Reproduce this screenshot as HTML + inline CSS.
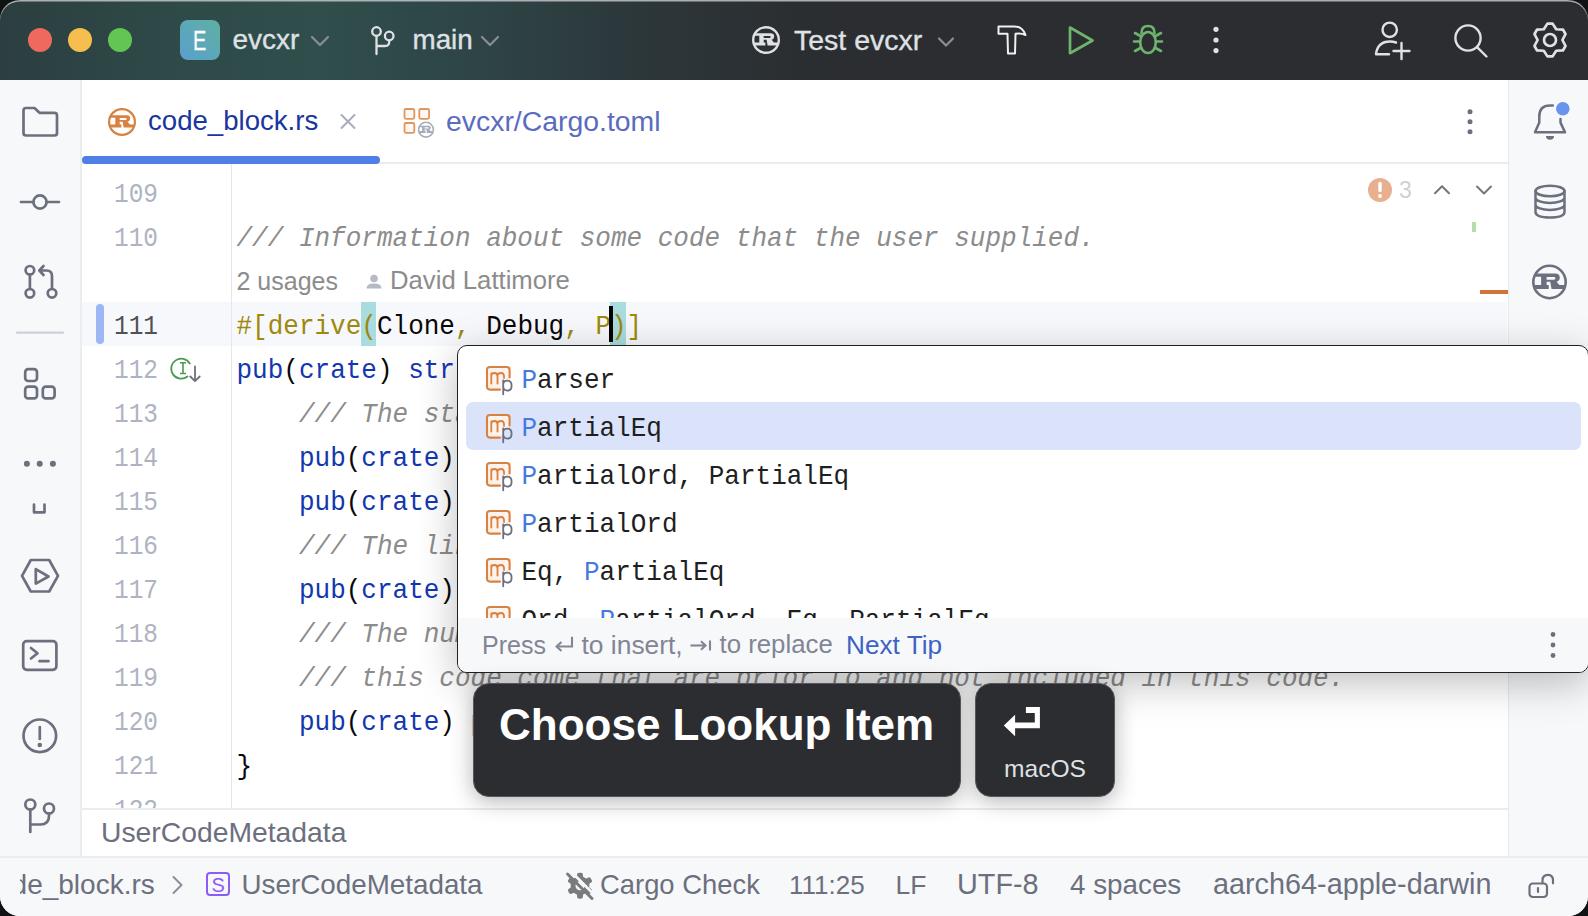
<!DOCTYPE html>
<html><head><meta charset="utf-8">
<style>
*{margin:0;padding:0;box-sizing:border-box}
html,body{width:1588px;height:916px;overflow:hidden;background:#111213}
body{font-family:"Liberation Sans",sans-serif;position:relative}
.win{position:absolute;left:0;top:0;width:1588px;height:916px;border-radius:20px;overflow:hidden;background:#fff}
.abs{position:absolute}
.t{position:absolute;white-space:pre;line-height:1}
svg.layer{position:absolute;left:0;top:0;width:1588px;height:916px;overflow:visible}
#title{left:0;top:0;width:1588px;height:80px;background:#2b2d30}
#title .grad{position:absolute;left:0;top:0;width:1588px;height:80px;
 background:linear-gradient(90deg,#2c3e40 0px,#2e4a49 180px,#2f4e4c 320px,#2e4547 470px,#2c373a 640px,#2b2e31 800px,#2b2d30 900px)}
#lefttb{left:0;top:80px;width:82px;height:777px;background:#f7f8fa;border-right:2px solid #ebecf0}
#righttb{left:1508px;top:80px;width:80px;height:777px;background:#f7f8fa;border-left:1.5px solid #e8e9ed}
#tabs{left:82px;top:80px;width:1426px;height:84px;background:#fff;border-bottom:2px solid #ebecf0}
.ln,.cl,.pi{position:absolute;font-family:"Liberation Mono",monospace;font-size:26px;line-height:1;white-space:pre;color:#080808;transform:scaleY(1.07);transform-origin:0 19.92px}
.ln{width:76px;text-align:right;color:#aeb3c2;transform:scale(0.94,1.07);transform-origin:100% 19.92px}
.kw{color:#1337b0}
.cm{color:#8c8c8c;font-style:italic}
.at{color:#9e880d}
.fd{color:#871094}
.pu{color:#080808}
#bread{left:82px;top:808px;width:1426px;height:49px;background:#fff;border-top:2px solid #ebecf0}
#status{left:0;top:856px;width:1588px;height:60px;background:#f7f8fa;border-top:2px solid #ebecf0}
.st{position:absolute;font-size:26px;color:#6c707e;white-space:pre;line-height:1}
.pi{color:#1e1f22}
.pi b{font-weight:normal;color:#4479e2}
</style></head><body>
<div class="win">
 <!-- title bar -->
 <div id="title" class="abs"><div class="grad"></div>
  <div class="abs" style="left:28px;top:28px;width:24px;height:24px;border-radius:50%;background:#ee6a5f"></div>
  <div class="abs" style="left:68px;top:28px;width:24px;height:24px;border-radius:50%;background:#f5be4f"></div>
  <div class="abs" style="left:108px;top:28px;width:24px;height:24px;border-radius:50%;background:#62c554"></div>
  <div class="abs" style="left:180px;top:20px;width:40px;height:40px;border-radius:8px;background:linear-gradient(45deg,#5a9fce,#5fb0a2)"></div>
 </div>
 <div id="lefttb" class="abs"></div>
 <div id="righttb" class="abs"></div>
 <!-- tabs -->
 <div id="tabs" class="abs">
  <div class="abs" style="left:0;top:76px;width:298px;height:8px;border-radius:4px;background:#4f7ee6"></div>
 </div>
 <!-- editor -->
 <div class="abs" style="left:82px;top:302px;width:1425px;height:44px;background:#f7f8fc"></div>
 <div class="abs" style="left:361px;top:302px;width:15px;height:44px;background:#a9dcde"></div>
 <div class="abs" style="left:610px;top:302px;width:16px;height:44px;background:#a9dcde"></div>
 <div class="abs" style="left:230.5px;top:164px;width:1.5px;height:644px;background:#e6e7eb"></div>
 <div class="abs" style="left:96px;top:304px;width:8px;height:40px;border-radius:4px;background:#9db7f5"></div>
 <div class="ln" style="left:82.00px;top:182.08px;">109</div>
 <div class="ln" style="left:82.00px;top:226.08px;">110</div>
 <div class="ln" style="left:82.00px;top:314.08px;color:#4f5157">111</div>
 <div class="ln" style="left:82.00px;top:358.08px;">112</div>
 <div class="ln" style="left:82.00px;top:402.08px;">113</div>
 <div class="ln" style="left:82.00px;top:446.08px;">114</div>
 <div class="ln" style="left:82.00px;top:490.08px;">115</div>
 <div class="ln" style="left:82.00px;top:534.08px;">116</div>
 <div class="ln" style="left:82.00px;top:578.08px;">117</div>
 <div class="ln" style="left:82.00px;top:622.08px;">118</div>
 <div class="ln" style="left:82.00px;top:666.08px;">119</div>
 <div class="ln" style="left:82.00px;top:710.08px;">120</div>
 <div class="ln" style="left:82.00px;top:754.08px;">121</div>
 <div class="ln" style="left:82.00px;top:798.08px;">122</div>
 <div class="cl" style="left:236.50px;top:226.08px;"><span class="cm">/// Information about some code that the user supplied.</span></div>
 <div class="cl" style="left:236.50px;top:314.08px;"><span class="at">#[derive(</span>Clone<span class="at">, </span>Debug<span class="at">, P)]</span></div>
 <div class="cl" style="left:236.50px;top:358.08px;"><span class="kw">pub</span>(<span class="kw">crate</span>) <span class="kw">struct</span> UserCodeMetadata {</div>
 <div class="cl" style="left:236.50px;top:402.08px;">    <span class="cm">/// The start byte</span></div>
 <div class="cl" style="left:236.50px;top:446.08px;">    <span class="kw">pub</span>(<span class="kw">crate</span>) <span class="fd">start_byte</span>: usize,</div>
 <div class="cl" style="left:236.50px;top:490.08px;">    <span class="kw">pub</span>(<span class="kw">crate</span>) <span class="fd">end_byte</span>: usize,</div>
 <div class="cl" style="left:236.50px;top:534.08px;">    <span class="cm">/// The line number</span></div>
 <div class="cl" style="left:236.50px;top:578.08px;">    <span class="kw">pub</span>(<span class="kw">crate</span>) <span class="fd">start_line</span>: usize,</div>
 <div class="cl" style="left:236.50px;top:622.08px;">    <span class="cm">/// The number of lines</span></div>
 <div class="cl" style="left:236.50px;top:666.08px;">    <span class="cm">/// this code come that are prior to and not included in this code.</span></div>
 <div class="cl" style="left:236.50px;top:710.08px;">    <span class="kw">pub</span>(<span class="kw">crate</span>) <span class="fd">prior_lines</span>: usize,</div>
 <div class="cl" style="left:236.50px;top:754.08px;">}</div>
 <div class="abs" style="left:609px;top:306px;width:4px;height:36px;background:#000"></div>


 <div id="bread" class="abs"></div>
 <div id="status" class="abs"></div>
 <!-- chrome icons -->
 <svg class="layer" viewBox="0 0 1588 916" fill="none" stroke-linecap="round" stroke-linejoin="round">
  <!-- title -->
  <g stroke="#8b8e95" stroke-width="2.2"><path d="M312 37L320 45L328 37"/><path d="M482 37L490 45L498 37"/><path d="M939 38.5L946 45.5L953 38.5"/></g>
  <g stroke="#dfe1e5" stroke-width="2.3">
   <circle cx="376.5" cy="31.5" r="4.3"/><circle cx="389.2" cy="36" r="4.3"/>
   <path d="M376.5 36V54M389.2 40.3V42Q389.2 46 385 46H376.5"/>
  </g>
  <g fill="#dfe1e5"><circle cx="766.0" cy="40.0" r="12.8" fill="none" stroke="#dfe1e5" stroke-width="2.4"/><g transform="translate(752.00 26.00) scale(1.000)"><path fill-rule="evenodd" d="M2.3 7.2H18.5Q22.2 7.2 22.2 10.5Q22.2 13 19.6 13.8L21.9 16.4H25.9V19.6H15.6L14.6 13.8H11.7V16.4H13.4V19.6H1.9V16.4H7.3V9.8H2.3ZM11.7 10H17.6Q18.7 10 18.7 11.05Q18.7 12.1 17.6 12.1H11.7Z"/></g></g>
  <path stroke="#f0f0f0" stroke-width="2" d="M998.5 26.5H1014.5Q1022.5 26.5 1025.5 35Q1021.5 33 1015.5 33.8L1015 53.5H1008L1007.5 33.8H998.5Z"/>
  <path stroke="#6db46f" stroke-width="2.7" d="M1070 27.5L1092.5 40.5L1070 53.2Z"/>
  <g stroke="#6db46f" stroke-width="2.6">
   <path d="M1141.5 33Q1141.5 26 1148 26Q1154.5 26 1154.5 33"/>
   <ellipse cx="1148" cy="42.5" rx="7.8" ry="10.5"/>
   <path d="M1134 41.5H1140M1156 41.5H1162M1135 33L1140.5 36M1161 33L1155.5 36M1135 51L1140.5 48M1161 51L1155.5 48"/>
  </g>
  <g fill="#dfe1e5"><circle cx="1216" cy="29.3" r="2.6"/><circle cx="1216" cy="40" r="2.6"/><circle cx="1216" cy="50.6" r="2.6"/></g>
  <g stroke="#dfe1e5" stroke-width="2.4">
   <circle cx="1389.7" cy="29.8" r="7.2"/>
   <path d="M1376 54.2Q1377.5 41.5 1390 41.5Q1393 41.5 1396 42.5M1376 54.2H1389"/>
   <path d="M1393.5 51H1409.5M1401.5 43V59"/>
   <circle cx="1468" cy="38" r="12.6"/><path d="M1477.3 47.3L1486.5 56.5"/>
   <path d="M1547.40 23.60 L1552.60 23.60 L1556.20 29.26 L1562.90 29.55 L1565.50 34.05 L1562.40 40.00 L1565.50 45.95 L1562.90 50.45 L1556.20 50.74 L1552.60 56.40 L1547.40 56.40 L1543.80 50.74 L1537.10 50.45 L1534.50 45.95 L1537.60 40.00 L1534.50 34.05 L1537.10 29.55 L1543.80 29.26Z" stroke-width="2.7"/><circle cx="1550" cy="40" r="6" stroke-width="2.7"/>
  </g>
  <!-- left toolbar -->
  <g stroke="#6c707e" stroke-width="2.7">
   <path d="M23.5 110.5Q23.5 108 26 108H34.5L39.5 112.8H54.5Q57 112.8 57 115.3V133Q57 135.5 54.5 135.5H26Q23.5 135.5 23.5 133Z"/>
   <path d="M21 202H33.3M46.7 202H59"/><circle cx="40" cy="202" r="6.6"/>
   <circle cx="29.9" cy="270.3" r="4.3"/><circle cx="29.9" cy="293.3" r="4.3"/><circle cx="52" cy="293.3" r="4.3"/>
   <path d="M29.9 274.6V289M52 289V276Q52 270.5 46.5 270.5H39.5M43.5 266L39.3 270.5L43.5 275"/>
   <rect x="25.2" y="369.2" width="11.8" height="11.8" rx="3"/><rect x="25.2" y="386.6" width="11.8" height="11.8" rx="3"/><rect x="42.8" y="386.6" width="11.8" height="11.8" rx="3"/>
   <path d="M34 504.5V512.3H44.5V504.5"/>
   <path d="M22 575.8L30.8 560H49.2L58 575.8L49.2 591.5H30.8Z"/><path d="M35.8 569.2L48.5 576.5L35.8 583.6Z"/>
   <rect x="23.2" y="641.2" width="33.2" height="28.6" rx="3.5"/><path d="M31 648L37.5 653.2L31 658.5M39.5 661.2H48.5"/>
   <circle cx="39.8" cy="735.8" r="16.3"/><path d="M39.8 727V739"/>
   <circle cx="30.3" cy="804.5" r="5"/><circle cx="49" cy="808.5" r="5"/><path d="M30.3 809.5V832M49 813.5V816Q49 824.5 40.5 824.5H30.3"/>
  </g>
  <path stroke="#cdd0d8" stroke-width="2.2" d="M17 332.7H63"/>
  <g fill="#6c707e"><circle cx="26.9" cy="463.7" r="3"/><circle cx="39.7" cy="463.7" r="3"/><circle cx="52.9" cy="463.7" r="3"/><circle cx="39.8" cy="745" r="2.3"/></g>
  <!-- right toolbar -->
  <g stroke="#6c707e" stroke-width="2.5">
   <path d="M1552.8 105.6H1550Q1539.3 105.6 1539.3 116.5V122.6L1535 132.3H1565L1560.5 122.6V119"/>
   <ellipse cx="1550" cy="191" rx="14.5" ry="5.3"/><path d="M1535.5 191V212Q1535.5 217.5 1550 217.5Q1564.5 217.5 1564.5 212V191M1535.5 197.7A14.5 5.3 0 0 0 1564.5 197.7M1535.5 204.7A14.5 5.3 0 0 0 1564.5 204.7"/>
  </g>
  <circle cx="1562.8" cy="108.7" r="6.8" fill="#6893ee"/><path fill="#6c707e" d="M1546 136H1554Q1554 139.8 1550 139.8Q1546 139.8 1546 136Z"/>
  <g fill="#6c707e"><circle cx="1549.5" cy="282.0" r="16.2" fill="none" stroke="#6c707e" stroke-width="2.6"/><g transform="translate(1532.00 264.50) scale(1.250)"><path fill-rule="evenodd" d="M2.3 7.2H18.5Q22.2 7.2 22.2 10.5Q22.2 13 19.6 13.8L21.9 16.4H25.9V19.6H15.6L14.6 13.8H11.7V16.4H13.4V19.6H1.9V16.4H7.3V9.8H2.3ZM11.7 10H17.6Q18.7 10 18.7 11.05Q18.7 12.1 17.6 12.1H11.7Z"/></g></g>
  <!-- tabs -->
  <g fill="#d9813f"><circle cx="122.0" cy="122.0" r="12.9" fill="none" stroke="#d9813f" stroke-width="2.2"/><g transform="translate(108.00 108.00) scale(1.000)"><path fill-rule="evenodd" d="M2.3 7.2H18.5Q22.2 7.2 22.2 10.5Q22.2 13 19.6 13.8L21.9 16.4H25.9V19.6H15.6L14.6 13.8H11.7V16.4H13.4V19.6H1.9V16.4H7.3V9.8H2.3ZM11.7 10H17.6Q18.7 10 18.7 11.05Q18.7 12.1 17.6 12.1H11.7Z"/></g></g>
  <path stroke="#a8adbd" stroke-width="2" d="M341.5 115L354.5 128M354.5 115L341.5 128"/>
  <g stroke="#e0965c" stroke-width="1.8" fill="#fff8f2">
   <rect x="404.5" y="109" width="9.8" height="9.8" rx="1.5"/><rect x="419.3" y="109" width="9.8" height="9.8" rx="1.5"/><rect x="404.5" y="123" width="9.8" height="9.8" rx="1.5"/>
  </g>
  <g fill="#a8adbd"><circle cx="426.0" cy="129.7" r="7.4" fill="none" stroke="#a8adbd" stroke-width="1.6"/><g transform="translate(417.80 121.50) scale(0.586)"><path fill-rule="evenodd" d="M2.3 7.2H18.5Q22.2 7.2 22.2 10.5Q22.2 13 19.6 13.8L21.9 16.4H25.9V19.6H15.6L14.6 13.8H11.7V16.4H13.4V19.6H1.9V16.4H7.3V9.8H2.3ZM11.7 10H17.6Q18.7 10 18.7 11.05Q18.7 12.1 17.6 12.1H11.7Z"/></g></g>
  <g fill="#6c707e"><circle cx="1470" cy="111.8" r="2.5"/><circle cx="1470" cy="121.8" r="2.5"/><circle cx="1470" cy="131.7" r="2.5"/></g>
  <!-- editor gutter & markers -->
  <circle cx="1380" cy="190" r="12" fill="#e8b08e"/>
  <path stroke="#fff" stroke-width="3.4" d="M1380 183.5V190.5"/><circle cx="1380" cy="196" r="1.9" fill="#fff"/>
  <g stroke="#73767f" stroke-width="2"><path d="M1435 193.3L1442 186.3L1449 193.3"/><path d="M1477 186.5L1484 193.5L1491 186.5"/></g>
  <rect x="1472" y="222" width="4" height="10" fill="#b6dcaa"/>
  <rect x="1480" y="290" width="28" height="4" fill="#d0743c"/>
  <path stroke="#4a9a50" stroke-width="1.8" d="M189.8 363.5A10 10 0 1 0 187.5 376.5"/>
  <path stroke="#4a9a50" stroke-width="1.6" stroke-linecap="butt" d="M180 362.8H186M183 362.8V373.5M180 373.5H186"/>
  <path stroke="#6c707e" stroke-width="1.8" d="M195 366.5V381M190.3 376.5L195 381.2L199.7 376.5"/>
  <g fill="#b5bac4"><circle cx="374" cy="278.5" r="3.8"/><path d="M366.5 288.5Q366.5 283.5 374 283.5Q381.5 283.5 381.5 288.5Z"/></g>
  <!-- status -->
  <path stroke="#8c8f9a" stroke-width="2" d="M173.5 877L181.5 885L173.5 893"/>
  <g fill="#7a7b7e"><path fill-rule="evenodd" d="M589.3 885.7 L589.3 885.3 L589.3 884.9 L589.3 884.5 L589.3 884.1 L589.7 883.5 L590.8 882.8 L591.8 882.0 L592.1 881.3 L592.0 880.7 L591.8 880.2 L591.5 879.7 L591.3 879.2 L591.0 878.7 L590.6 878.2 L590.3 877.8 L589.8 877.5 L589.1 877.3 L587.9 877.8 L586.7 878.4 L586.1 878.4 L585.7 878.3 L585.3 878.1 L585.0 877.9 L584.6 877.6 L584.3 877.4 L583.9 877.3 L583.6 877.1 L583.2 876.8 L583.0 876.2 L582.9 874.9 L582.7 873.6 L582.2 873.1 L581.7 872.9 L581.1 872.8 L580.6 872.7 L580.0 872.7 L579.4 872.7 L578.9 872.8 L578.3 872.9 L577.8 873.1 L577.3 873.6 L577.1 874.9 L577.0 876.2 L576.8 876.8 L576.4 877.1 L576.1 877.3 L575.7 877.4 L575.4 877.6 L575.0 877.9 L574.7 878.1 L574.3 878.3 L573.9 878.4 L573.3 878.4 L572.1 877.8 L570.9 877.3 L570.2 877.5 L569.7 877.8 L569.4 878.2 L569.0 878.7 L568.7 879.2 L568.5 879.7 L568.2 880.2 L568.0 880.7 L567.9 881.3 L568.2 882.0 L569.2 882.8 L570.3 883.5 L570.7 884.1 L570.7 884.5 L570.7 884.9 L570.7 885.3 L570.7 885.7 L570.7 886.1 L570.7 886.5 L570.7 886.9 L570.7 887.3 L570.3 887.9 L569.2 888.6 L568.2 889.4 L567.9 890.1 L568.0 890.7 L568.2 891.2 L568.5 891.7 L568.7 892.2 L569.0 892.7 L569.4 893.2 L569.7 893.6 L570.2 893.9 L570.9 894.1 L572.1 893.6 L573.3 893.0 L573.9 893.0 L574.3 893.1 L574.7 893.3 L575.0 893.5 L575.4 893.8 L575.7 894.0 L576.1 894.1 L576.4 894.3 L576.8 894.6 L577.0 895.2 L577.1 896.5 L577.3 897.8 L577.8 898.3 L578.3 898.5 L578.9 898.6 L579.4 898.7 L580.0 898.7 L580.6 898.7 L581.1 898.6 L581.7 898.5 L582.2 898.3 L582.7 897.8 L582.9 896.5 L583.0 895.2 L583.2 894.6 L583.6 894.3 L583.9 894.1 L584.3 894.0 L584.6 893.8 L585.0 893.5 L585.3 893.3 L585.7 893.1 L586.1 893.0 L586.7 893.0 L587.9 893.6 L589.1 894.1 L589.8 893.9 L590.3 893.6 L590.6 893.2 L591.0 892.7 L591.3 892.2 L591.5 891.7 L591.8 891.2 L592.0 890.7 L592.1 890.1 L591.8 889.4 L590.8 888.6 L589.7 887.9 L589.3 887.3 L589.3 886.9 L589.3 886.5 L589.3 886.1ZM575.5 885.7a4.5 4.5 0 1 0 9.0 0a4.5 4.5 0 1 0 -9.0 0Z"/></g><path stroke="#f7f8fa" stroke-width="2.6" d="M570 870.5L596 896.5"/><path stroke="#7a7b7e" stroke-width="3" d="M567.5 874L592 898.5"/>
  <rect x="207" y="873" width="22" height="22" rx="3" stroke="#8b5cf6" stroke-width="2"/>
  <rect x="1529.5" y="883.5" width="17.5" height="13.5" rx="3.2" stroke="#6c707e" stroke-width="2.2"/><path stroke="#6c707e" stroke-width="2.2" d="M1538 888V892M1542.5 883V880.5Q1542.5 874.8 1548 874.8Q1553 874.8 1553 880.5V883.3"/>
 </svg>
 <div class="t" style="left:192.80px;top:28.04px;font-size:27.00px;color:#fff;transform:scaleX(0.74);transform-origin:0 0;-webkit-text-stroke:0.3px #fff">E</div>
 <div class="t" style="left:232.50px;top:26.49px;font-size:28.00px;color:#dfe1e5;-webkit-text-stroke:0.35px #dfe1e5">evcxr</div>
 <div class="t" style="left:412.50px;top:26.46px;font-size:27.80px;color:#dfe1e5;-webkit-text-stroke:0.35px #dfe1e5">main</div>
 <div class="t" style="left:794.00px;top:25.87px;font-size:28.50px;color:#dfe1e5;-webkit-text-stroke:0.35px #dfe1e5">Test evcxr</div>
 <div class="t" style="left:148.00px;top:107.23px;font-size:27.60px;color:#1b35a0;">code_block.rs</div>
 <div class="t" style="left:446.00px;top:106.95px;font-size:28.40px;color:#5a6bc0;">evcxr/Cargo.toml</div>
 <div class="t" style="left:236.50px;top:268.63px;font-size:25.00px;color:#8c8c8c;">2 usages</div>
 <div class="t" style="left:390.00px;top:268.04px;font-size:25.70px;color:#8c8c8c;">David Lattimore</div>
 <div class="t" style="left:101.00px;top:818.44px;font-size:28.30px;color:#6c707e;">UserCodeMetadata</div>
 <div class="abs" style="left:20px;top:860px;width:200px;height:50px;overflow:hidden"><div class="t" style="left:-38.00px;top:10.59px;font-size:28.00px;color:#6c707e;">code_block.rs</div></div>
 <div class="t" style="left:1399.00px;top:178.53px;font-size:23.00px;color:#cfd0d3;">3</div>
 <div class="t" style="left:241.50px;top:870.76px;font-size:27.80px;color:#6c707e;">UserCodeMetadata</div>
 <div class="t" style="left:600.00px;top:871.10px;font-size:27.40px;color:#6c707e;">Cargo Check</div>
 <div class="t" style="left:789.00px;top:872.29px;font-size:26.00px;color:#6c707e;">111:25</div>
 <div class="t" style="left:895.50px;top:871.86px;font-size:26.50px;color:#6c707e;">LF</div>
 <div class="t" style="left:957.00px;top:869.92px;font-size:28.80px;color:#6c707e;">UTF-8</div>
 <div class="t" style="left:1070.00px;top:870.76px;font-size:27.80px;color:#6c707e;">4 spaces</div>
 <div class="t" style="left:1213.00px;top:869.92px;font-size:28.80px;color:#6c707e;">aarch64-apple-darwin</div>
 <div class="t" style="left:211.50px;top:875.07px;font-size:20.00px;color:#8b5cf6;">S</div>

 <!-- popup -->
 <div class="abs" style="left:457px;top:345px;width:1132px;height:328px;background:#fff;border:1.5px solid #1e1f22;border-radius:10px;overflow:hidden;box-shadow:0 10px 40px rgba(0,0,0,0.26)">
  <div class="abs" style="left:7.5px;top:56px;width:1115px;height:48px;border-radius:7px;background:#dbe3fb"></div>
  <div class="abs" style="left:0;top:272px;width:1160px;height:56px;background:#f7f8fa"></div>
 </div>
 <div class="abs" style="left:0;top:0;width:1588px;height:618px;overflow:hidden">
 <div class="pi" style="left:521.50px;top:368.38px;"><b>P</b>arser</div>
 <div class="pi" style="left:521.50px;top:416.38px;"><b>P</b>artialEq</div>
 <div class="pi" style="left:521.50px;top:464.38px;"><b>P</b>artialOrd, PartialEq</div>
 <div class="pi" style="left:521.50px;top:512.38px;"><b>P</b>artialOrd</div>
 <div class="pi" style="left:521.50px;top:560.38px;">Eq, <b>P</b>artialEq</div>
 <div class="pi" style="left:521.50px;top:608.38px;">Ord, <b>P</b>artialOrd, Eq, PartialEq</div>
 </div>
 <div class="t" style="left:482.00px;top:633.03px;font-size:25.00px;color:#818594;">Press</div>
 <div class="t" style="left:581.50px;top:631.85px;font-size:26.40px;color:#818594;">to insert,</div>
 <div class="t" style="left:719.50px;top:632.36px;font-size:25.80px;color:#818594;">to replace</div>
 <div class="t" style="left:846.00px;top:632.02px;font-size:26.20px;color:#3d63c4;">Next Tip</div>
 <svg class="layer" viewBox="0 0 1588 916" fill="none">
  <g stroke="#818594" stroke-width="2.1" stroke-linecap="butt" stroke-linejoin="miter">
   <path d="M572 636.8V646.5H558"/><path d="M561.5 642L556.5 646.5L561.5 651" stroke-linejoin="round"/>
   <path d="M690.5 645.5H705.5"/><path d="M701 641.3L705.5 645.5L701 649.7"/><path d="M710 640.5V650.5"/>
  </g>
 </svg>
 <svg class="layer" viewBox="0 0 1588 916" fill="none" stroke-linecap="round" stroke-linejoin="round">
  <clipPath id="pc"><rect x="0" y="0" width="1588" height="618"/></clipPath><g clip-path="url(#pc)"><g transform="translate(486 366)"><path d="M14 23.6H4Q1 23.6 1 20.6V4Q1 1 4 1H20.6Q23.6 1 23.6 4V11.5" fill="#fdf3ec" stroke="#d9813f" stroke-width="2.1"/><path d="M5.3 17.6V7.5M5.3 10.5Q5.3 7 8.5 7Q11.5 7 11.5 10.5V17.6M11.5 10.5Q11.5 7 14.8 7Q18 7 18 10.5V12" fill="none" stroke="#d9813f" stroke-width="1.8"/><path d="M17.2 14.3V28.3M17.2 18.6Q17.2 14.6 21.4 14.6Q25.6 14.6 25.6 19.7Q25.6 24.6 21.4 24.6Q17.2 24.6 17.2 20.6" fill="none" stroke="#6c707e" stroke-width="1.8"/></g><g transform="translate(486 414)"><path d="M14 23.6H4Q1 23.6 1 20.6V4Q1 1 4 1H20.6Q23.6 1 23.6 4V11.5" fill="#fdf3ec" stroke="#d9813f" stroke-width="2.1"/><path d="M5.3 17.6V7.5M5.3 10.5Q5.3 7 8.5 7Q11.5 7 11.5 10.5V17.6M11.5 10.5Q11.5 7 14.8 7Q18 7 18 10.5V12" fill="none" stroke="#d9813f" stroke-width="1.8"/><path d="M17.2 14.3V28.3M17.2 18.6Q17.2 14.6 21.4 14.6Q25.6 14.6 25.6 19.7Q25.6 24.6 21.4 24.6Q17.2 24.6 17.2 20.6" fill="none" stroke="#6c707e" stroke-width="1.8"/></g><g transform="translate(486 462)"><path d="M14 23.6H4Q1 23.6 1 20.6V4Q1 1 4 1H20.6Q23.6 1 23.6 4V11.5" fill="#fdf3ec" stroke="#d9813f" stroke-width="2.1"/><path d="M5.3 17.6V7.5M5.3 10.5Q5.3 7 8.5 7Q11.5 7 11.5 10.5V17.6M11.5 10.5Q11.5 7 14.8 7Q18 7 18 10.5V12" fill="none" stroke="#d9813f" stroke-width="1.8"/><path d="M17.2 14.3V28.3M17.2 18.6Q17.2 14.6 21.4 14.6Q25.6 14.6 25.6 19.7Q25.6 24.6 21.4 24.6Q17.2 24.6 17.2 20.6" fill="none" stroke="#6c707e" stroke-width="1.8"/></g><g transform="translate(486 510)"><path d="M14 23.6H4Q1 23.6 1 20.6V4Q1 1 4 1H20.6Q23.6 1 23.6 4V11.5" fill="#fdf3ec" stroke="#d9813f" stroke-width="2.1"/><path d="M5.3 17.6V7.5M5.3 10.5Q5.3 7 8.5 7Q11.5 7 11.5 10.5V17.6M11.5 10.5Q11.5 7 14.8 7Q18 7 18 10.5V12" fill="none" stroke="#d9813f" stroke-width="1.8"/><path d="M17.2 14.3V28.3M17.2 18.6Q17.2 14.6 21.4 14.6Q25.6 14.6 25.6 19.7Q25.6 24.6 21.4 24.6Q17.2 24.6 17.2 20.6" fill="none" stroke="#6c707e" stroke-width="1.8"/></g><g transform="translate(486 558)"><path d="M14 23.6H4Q1 23.6 1 20.6V4Q1 1 4 1H20.6Q23.6 1 23.6 4V11.5" fill="#fdf3ec" stroke="#d9813f" stroke-width="2.1"/><path d="M5.3 17.6V7.5M5.3 10.5Q5.3 7 8.5 7Q11.5 7 11.5 10.5V17.6M11.5 10.5Q11.5 7 14.8 7Q18 7 18 10.5V12" fill="none" stroke="#d9813f" stroke-width="1.8"/><path d="M17.2 14.3V28.3M17.2 18.6Q17.2 14.6 21.4 14.6Q25.6 14.6 25.6 19.7Q25.6 24.6 21.4 24.6Q17.2 24.6 17.2 20.6" fill="none" stroke="#6c707e" stroke-width="1.8"/></g><g transform="translate(486 606)"><path d="M14 23.6H4Q1 23.6 1 20.6V4Q1 1 4 1H20.6Q23.6 1 23.6 4V11.5" fill="#fdf3ec" stroke="#d9813f" stroke-width="2.1"/><path d="M5.3 17.6V7.5M5.3 10.5Q5.3 7 8.5 7Q11.5 7 11.5 10.5V17.6M11.5 10.5Q11.5 7 14.8 7Q18 7 18 10.5V12" fill="none" stroke="#d9813f" stroke-width="1.8"/><path d="M17.2 14.3V28.3M17.2 18.6Q17.2 14.6 21.4 14.6Q25.6 14.6 25.6 19.7Q25.6 24.6 21.4 24.6Q17.2 24.6 17.2 20.6" fill="none" stroke="#6c707e" stroke-width="1.8"/></g></g>
  <g fill="#6c707e"><circle cx="1553" cy="634.5" r="2.4"/><circle cx="1553" cy="645" r="2.4"/><circle cx="1553" cy="655.5" r="2.4"/></g>
 </svg>

 <!-- overlay -->
 <div class="abs" style="left:473px;top:683px;width:488px;height:114px;border-radius:16px;background:#2b2d30;border:1px solid #55575c;box-shadow:0 4px 22px rgba(0,0,0,0.3)">
 </div>
 <div class="abs" style="left:975px;top:683px;width:140px;height:114px;border-radius:16px;background:#2b2d30;border:1px solid #55575c;box-shadow:0 4px 22px rgba(0,0,0,0.3)">
 </div>
 <svg class="layer" viewBox="0 0 1588 916"><path fill="#fff" d="M1003.8 725.5L1015.1 714.7V722.6H1034.8V713H1025.9V707.1H1039.9V728.2H1015.1V736.3Z"/></svg>
 <div class="t" style="left:499.00px;top:703.05px;font-size:44.00px;color:#fff;font-weight:bold">Choose Lookup Item</div>
 <div class="t" style="left:1004.00px;top:756.97px;font-size:24.60px;color:#dfe1e5;">macOS</div>
 <div class="abs" style="left:0;top:0;width:1588px;height:916px;border-radius:20px;box-shadow:inset 0 1.5px 0 rgba(205,205,205,0.8)"></div>
</div>
</body></html>
